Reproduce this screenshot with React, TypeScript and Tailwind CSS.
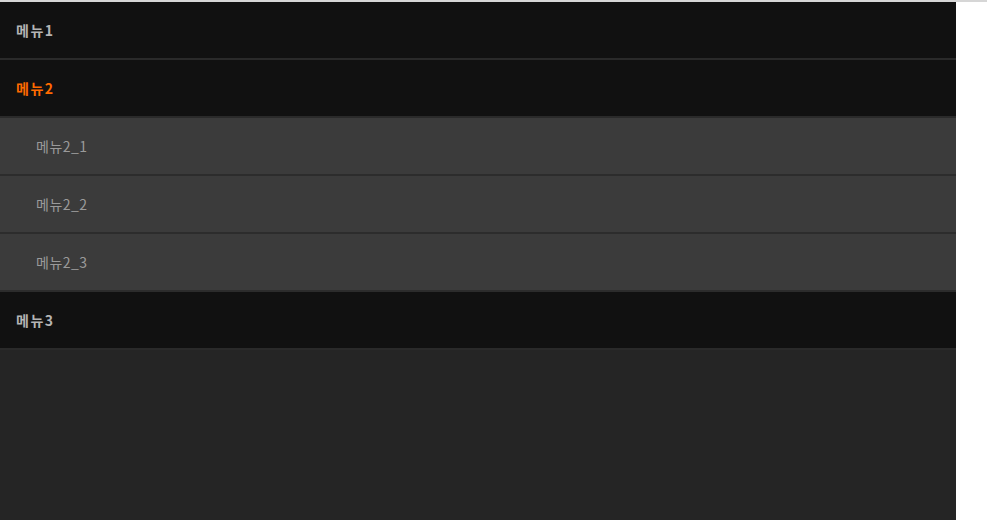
import { useState } from "react";

interface MenuItem {
  label: string;
  children?: string[];
}

const MENUS: MenuItem[] = [
  { label: "메뉴1" },
  { label: "메뉴2", children: ["메뉴2_1", "메뉴2_2", "메뉴2_3"] },
  { label: "메뉴3" },
];

export default function App() {
  const [open, setOpen] = useState("메뉴2");

  return (
    <div
      className="min-h-[520px] bg-white border-t-2 border-[#d6d6d6]"
      style={{ fontFamily: '"Noto Sans CJK KR", "Noto Sans", sans-serif' }}
    >
      <nav className="w-[956px] min-h-[518px] bg-[#252525]">
        <ul>
          {MENUS.map((m) => (
            <li key={m.label}>
              <button
                onClick={() => setOpen((o) => (o === m.label ? "" : m.label))}
                className={`w-full h-[58px] px-4 flex items-center text-left text-sm font-bold tracking-[1.5px] bg-[#111111] border-b-2 border-[#2a2a2a] ${
                  open === m.label ? "text-[#ff6a00]" : "text-[#b4b4b4]"
                }`}
              >
                {m.label}
              </button>
              {open === m.label && m.children && (
                <ul>
                  {m.children.map((c) => (
                    <li
                      key={c}
                      className="h-[58px] pl-9 flex items-center text-sm tracking-[0.5px] text-[#9a9a9a] bg-[#3b3b3b] border-b-2 border-[#2c2c2c]"
                    >
                      {c}
                    </li>
                  ))}
                </ul>
              )}
            </li>
          ))}
        </ul>
      </nav>
    </div>
  );
}
